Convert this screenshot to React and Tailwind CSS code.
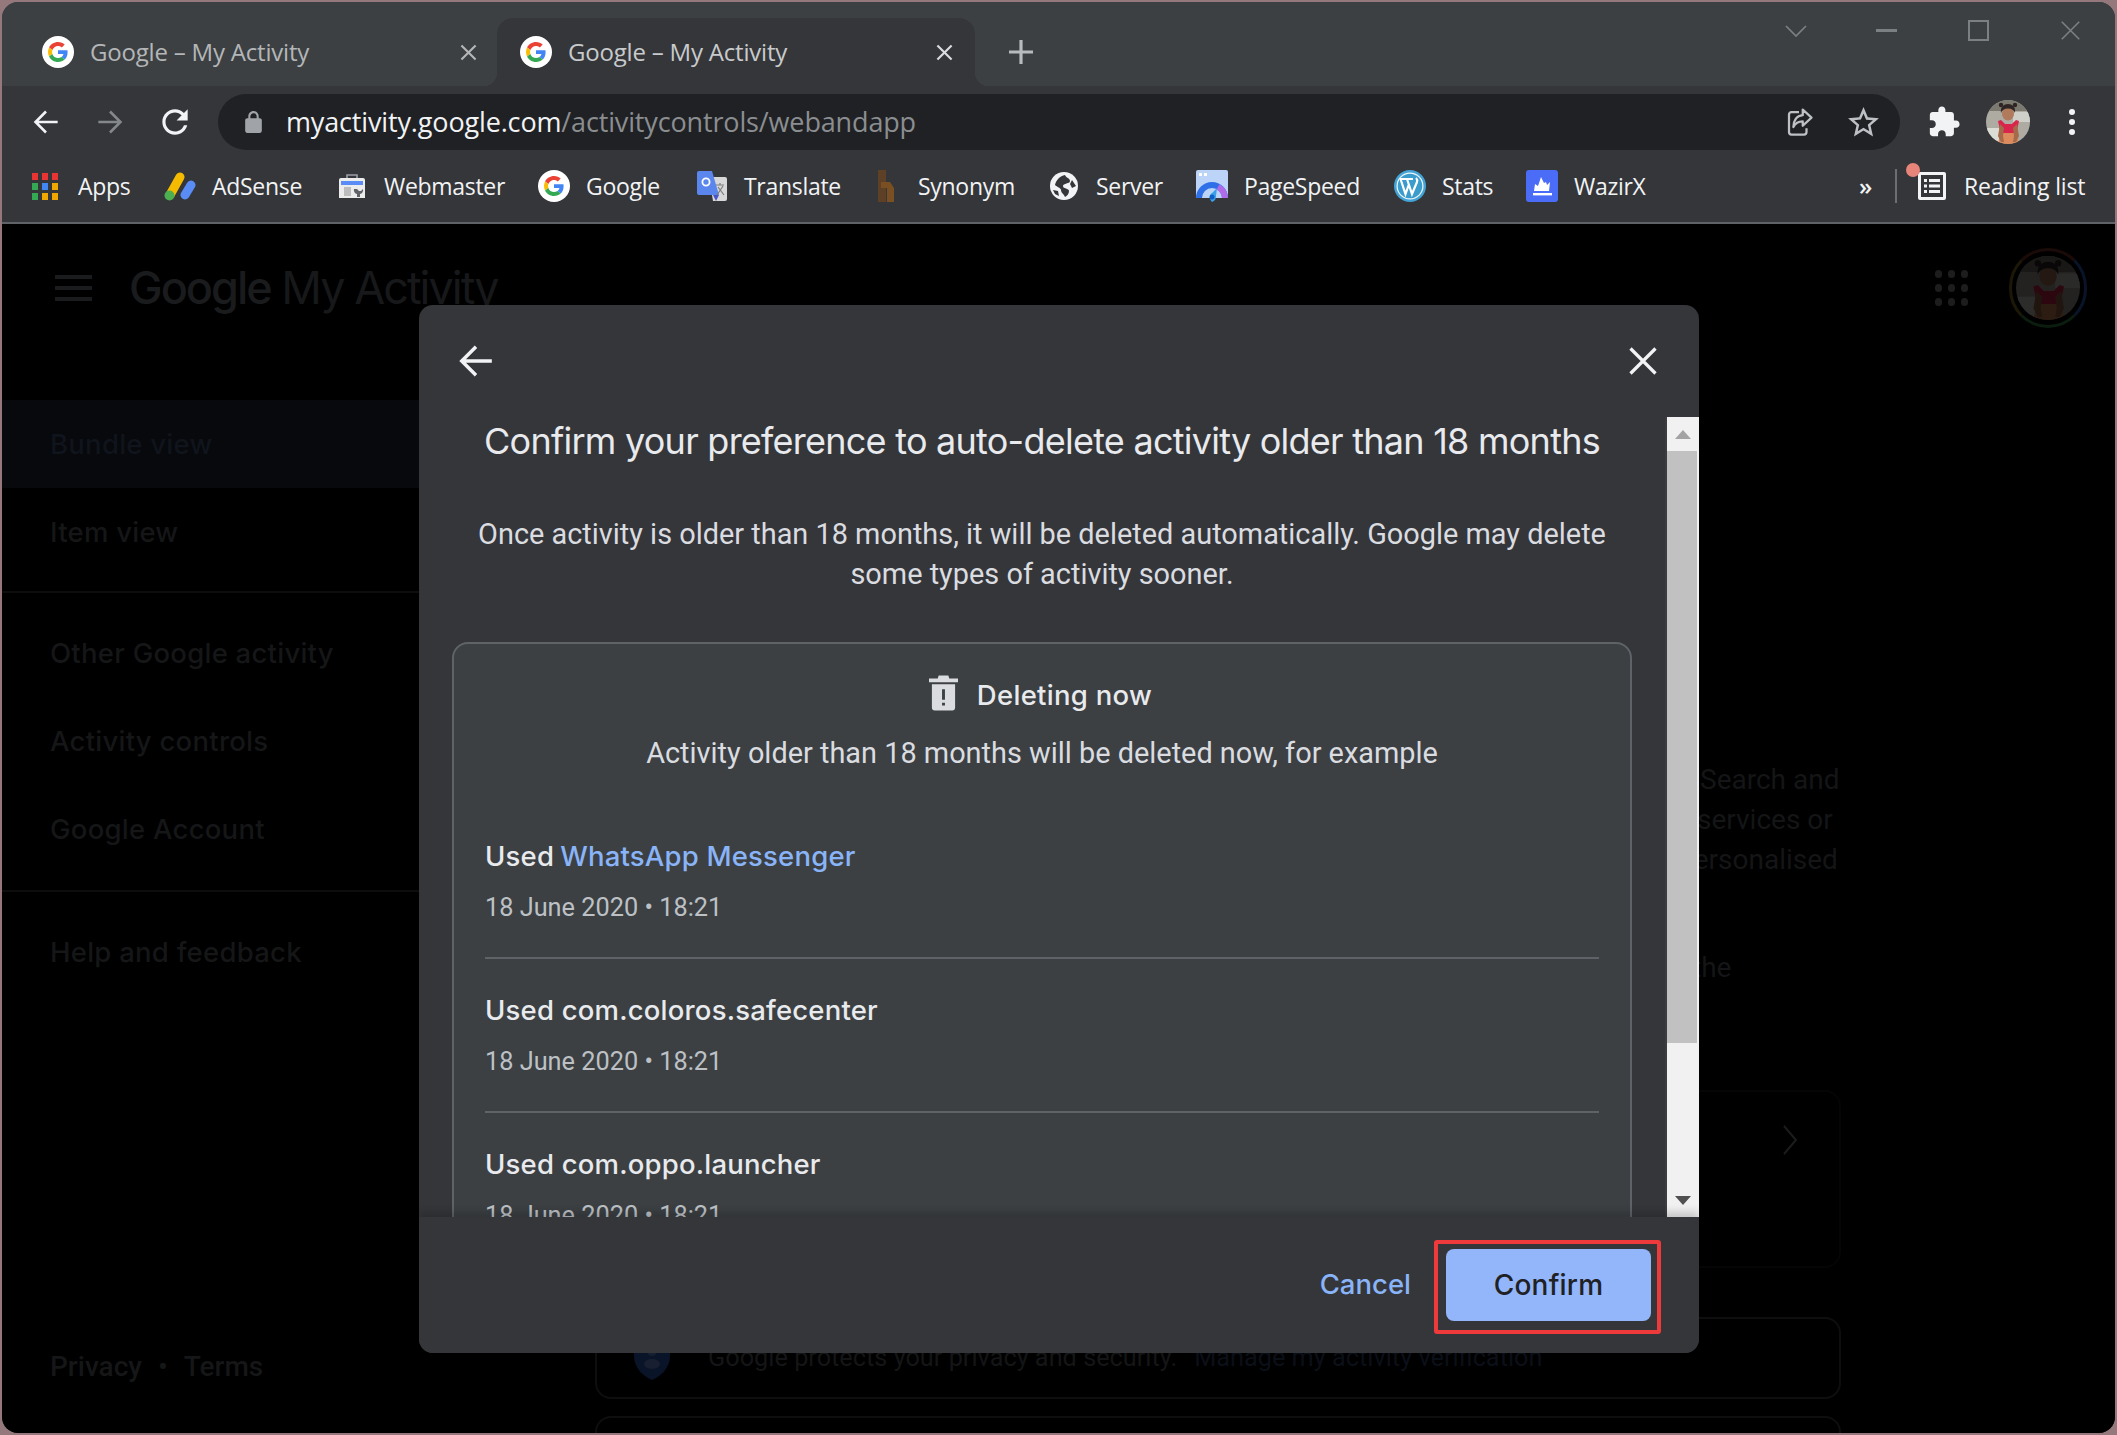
import React from "react";

const ui = "font-['Open_Sans',sans-serif]";
const gs = "font-['Inter',sans-serif]";
const rb = "font-['Roboto',sans-serif]";

function G({ className }) {
  return (
    <svg viewBox="0 0 64 64" className={className}>
      <circle cx="32" cy="32" r="32" fill="#fff" />
      <g transform="translate(12 12) scale(0.834)">
        <path fill="#EA4335" d="M24 9.5c3.54 0 6.71 1.22 9.21 3.6l6.85-6.85C35.9 2.38 30.47 0 24 0 14.62 0 6.51 5.38 2.56 13.22l7.98 6.19C12.43 13.72 17.74 9.5 24 9.5z" />
        <path fill="#4285F4" d="M46.98 24.55c0-1.57-.15-3.09-.38-4.55H24v9.02h12.94c-.58 2.96-2.26 5.48-4.78 7.18l7.73 6c4.51-4.18 7.09-10.36 7.09-17.65z" />
        <path fill="#FBBC05" d="M10.53 28.59c-.48-1.45-.76-2.99-.76-4.59s.27-3.14.76-4.59l-7.98-6.19C.92 16.46 0 20.12 0 24c0 3.88.92 7.54 2.56 10.78l7.97-6.19z" />
        <path fill="#34A853" d="M24 48c6.48 0 11.93-2.13 15.89-5.81l-7.73-6c-2.15 1.45-4.92 2.3-8.16 2.3-6.26 0-11.57-4.22-13.47-9.91l-7.98 6.19C6.51 42.62 14.62 48 24 48z" />
      </g>
    </svg>
  );
}

function Arrow({ className, dir = "left", color = "#fff", sw = 2.2 }) {
  return (
    <svg viewBox="0 0 24 24" className={className} fill="none" stroke={color} strokeWidth={sw}>
      {dir === "left" ? <path d="M22 12H3M12 3l-9 9 9 9" /> : <path d="M2 12h19M12 3l9 9-9 9" />}
    </svg>
  );
}

function X({ className, color, sw = 2.2 }) {
  return (
    <svg viewBox="0 0 24 24" className={className} fill="none" stroke={color} strokeWidth={sw}>
      <path d="M2 2l20 20M22 2L2 22" />
    </svg>
  );
}

function Avatar({ className, id }) {
  return (
    <svg viewBox="0 0 44 44" className={className}>
      <defs>
        <clipPath id={id}><circle cx="22" cy="22" r="22" /></clipPath>
      </defs>
      <g clipPath={`url(#${id})`}>
        <rect width="44" height="44" fill="#aeaca2" />
        <rect x="0" y="0" width="44" height="11" fill="#7c7a70" />
        <rect x="27" y="12" width="17" height="10" fill="#cfd0ca" />
        <rect x="0" y="28" width="13" height="16" fill="#dcdcd6" />
        <path d="M12 21l3-1 4 4h7l4-4 3 1-2 9-2 4H16l-2-4z" fill="#d9254c" />
        <path d="M14 33h17l2 11H12z" fill="#dd8a5c" />
        <path d="M14 24l-2 12 3 6h3l-1-6 1-8zM31 24l2 12-3 6h-3l1-6-1-8z" fill="#a56a4a" />
        <ellipse cx="22" cy="14" rx="6" ry="6.5" fill="#b07a5c" />
        <path d="M15 13c-1-6 3-9 7-9s8 3 7 9c-1-3-3-4.500-7-4.500s-6 1.500-7 4.500z" fill="#2e2524" />
        <circle cx="15" cy="5" r="2.200" fill="#2e2524" /><circle cx="29" cy="5" r="2.200" fill="#2e2524" />
      </g>
    </svg>
  );
}

function Bookmark({ w, icon, label, gap }) {
  return (
    <div className={`flex items-center shrink-0 ${w}`}>
      <div className={`flex items-center justify-center shrink-0 ${gap}`}>{icon}</div>
      <span className={`${ui} text-[23px] tracking-[-0.3px] text-[#f1f3f4] whitespace-nowrap leading-none`}>{label}</span>
    </div>
  );
}

const AppsIcon = (
  <svg viewBox="0 0 27 27" className="w-[27px] h-[27px]">
    <rect x="0" y="0" width="6" height="7" fill="#ea3333" /><rect x="10" y="0" width="6" height="7" fill="#ea3333" /><rect x="20" y="0" width="6" height="7" fill="#ea3333" />
    <rect x="0" y="10" width="6" height="7" fill="#34a853" /><rect x="10" y="10" width="6" height="7" fill="#4285f4" /><rect x="20" y="10" width="6" height="7" fill="#f0a800" />
    <rect x="0" y="20" width="6" height="7" fill="#34a853" /><rect x="10" y="20" width="6" height="7" fill="#f0a800" /><rect x="20" y="20" width="6" height="7" fill="#f0a800" />
  </svg>
);
const AdSense = (
  <svg viewBox="0 0 32 29" className="w-[32px] h-[29px]">
    <path d="M6 23L16 5" stroke="#f4bb00" strokeWidth="9" strokeLinecap="round" />
    <path d="M21 23L27 13" stroke="#5a8cf5" strokeWidth="9" strokeLinecap="round" />
    <circle cx="5.5" cy="23.5" r="5" fill="#4caf50" />
  </svg>
);
const Webmaster = (
  <svg viewBox="0 0 26 24" className="w-[26px] h-[24px]">
    <path d="M8 4V1h10v3" fill="none" stroke="#9aa0a6" strokeWidth="1.6" />
    <path d="M2 4h22a2 2 0 0 1 2 2v18H0V6a2 2 0 0 1 2-2z" fill="#ececec" />
    <rect x="2" y="7" width="22" height="4" fill="#5a8cf5" />
    <rect x="5" y="13" width="7" height="9" fill="#bdbdbd" />
    <path d="M15 15a4 4 0 0 0 3 5v3h3v-3a4 4 0 0 0 3-5l-2 2h-2l-2-2z" fill="#5f6368" />
  </svg>
);
const Translate = (
  <svg viewBox="0 0 30 30" className="w-[30px] h-[30px]">
    <path d="M12 6h16a2 2 0 0 1 2 2v20a2 2 0 0 1-2 2H16z" fill="#d8d8d8" />
    <path d="M2 0h13l7 24H2a2 2 0 0 1-2-2V2a2 2 0 0 1 2-2z" fill="#5a86ee" />
    <path d="M16 24l3 6 3-6z" fill="#4a55c8" />
    <circle cx="9" cy="11" r="3.6" fill="none" stroke="#fff" strokeWidth="1.8" />
    <path d="M19 14h8M23 12v2M20 24l6-9M21 16l6 8" stroke="#7d7d7d" strokeWidth="1.2" fill="none" />
  </svg>
);
const SynonymIcon = (
  <svg viewBox="0 0 18 32" className="w-[18px] h-[32px]">
    <rect x="1" y="0" width="8" height="32" fill="#5e4026" />
    <path d="M4 12h9l4 6v14h-7V18H4z" fill="#7a4f22" />
  </svg>
);
const ServerIcon = (
  <svg viewBox="0 0 28 28" className="w-[28px] h-[28px]">
    <circle cx="14" cy="14" r="14" fill="#f1f3f4" />
    <path d="M14 3c1 3 5 3 5 6 0 3-7 2-7 5 0 3 6 2 6 5 0 3-2 5-4 6-1-3-4-4-4-7 0-2-4-3-6-5 1-5 5-9 10-10z" fill="#35363a" transform="translate(1 0)" />
    <path d="M22 8l4 6-4 2-2-4zM3 18l5 1 1 5-4-2z" fill="#35363a" />
  </svg>
);
const PageSpeed = (
  <svg viewBox="0 0 32 33" className="w-[32px] h-[33px]">
    <path d="M2 0h28a2 2 0 0 1 2 2v26H0V2a2 2 0 0 1 2-2z" fill="#bcd4f8" />
    <rect x="3" y="3" width="3" height="3" fill="#fff" /><rect x="8" y="3" width="3" height="3" fill="#fff" />
    <path d="M3 28a13 13 0 0 1 26 0" fill="none" stroke="#2f6fe8" strokeWidth="6" />
    <path d="M22 17a13 13 0 0 1 7 11" fill="none" stroke="#b06be8" strokeWidth="6" />
    <path d="M16 32c-3-3-3-7 0-9l5-5-1 8c0 3-1 5-4 6z" fill="#3aa0e8" />
    <circle cx="16" cy="27" r="2.5" fill="#0f5fc8" />
  </svg>
);
const WP = (
  <svg viewBox="0 0 32 32" className="w-[32px] h-[32px]">
    <circle cx="16" cy="16" r="16" fill="#42a4d6" />
    <circle cx="16" cy="16" r="13.500" fill="#f1f6f9" />
    <circle cx="16" cy="16" r="12.300" fill="#3a9ccc" />
    <path d="M6 9h7M6.500 9l5 15 3.500-10M12 9h7M13 9l5 15 5-12c.7-2 0-3-1-4" fill="none" stroke="#fff" strokeWidth="2.200" />
  </svg>
);
const Wazir = (
  <svg viewBox="0 0 32 32" className="w-[32px] h-[32px]">
    <rect width="32" height="32" rx="3" fill="#4a6cf7" />
    <path d="M8 21l1-7 3 2 3-9 3 6 2-1 1 3 3-3-1 9z" fill="#fff" />
    <rect x="7" y="23" width="19" height="2.400" fill="#fff" />
  </svg>
);

function Row({ children, divider }) {
  return (
    <div className={`h-[154px] flex flex-col shrink-0 ${divider ? "border-b-2 border-[#5f6368]" : ""}`}>
      <div className={`${gs} h-[34px] mt-[35px] flex items-center text-[27.5px] font-medium tracking-[0.2px] text-[#e8eaed] whitespace-nowrap`}>{children}</div>
      <div className={`${rb} h-[34px] mt-[17px] flex items-center text-[25.3px] text-[#bdc1c6] whitespace-nowrap`}>18 June 2020 • 18:21</div>
    </div>
  );
}

function Modal() {
  return (
    <div className="absolute left-[417px] top-[303px] w-[1280px] h-[1048px] bg-[#35363a] rounded-[14px] overflow-hidden flex flex-col">
      <div className="h-[112px] shrink-0 flex items-center justify-between pl-[38px] pr-[41px]">
        <Arrow className="w-[38px] h-[38px]" color="#f1f3f4" sw={2.2} />
        <X className="w-[30px] h-[30px]" color="#f1f3f4" sw={2.6} />
      </div>
      <div className="flex-1 min-h-0 flex">
        <div className="flex-1 min-w-0 overflow-hidden px-[33px]">
          <h1 className={`${gs} h-[48px] flex items-center justify-center text-[36px] font-normal tracking-[-0.75px] text-[#e8eaed] whitespace-nowrap`}>
            Confirm your preference to auto-delete activity older than 18 months
          </h1>
          <p className={`${rb} mt-[49px] text-center text-[28.9px] leading-[40px] text-[#dadce0] whitespace-nowrap`}>
            Once activity is older than 18 months, it will be deleted automatically. Google may delete<br />some types of activity sooner.
          </p>
          <div className="mt-[48px] bg-[#3c4043] border-2 border-[#5f6368] rounded-[16px] px-[31px] h-[700px]">
            <div className="h-[37px] mt-[33px] flex items-center justify-center gap-[19px]">
              <svg viewBox="0 0 30 36" className="w-[29px] h-[36px] mt-[-5px] ml-[-3px]">
                <path fillRule="evenodd" fill="#dadce0" d="M10 0h10l1 3h9v4H0V3h9zM3 9h24v24a3 3 0 0 1-3 3H6a3 3 0 0 1-3-3zM13.5 14v11h3V14zM13.5 28v3h3v-3z" />
              </svg>
              <span className={`${gs} text-[27.5px] font-medium tracking-[0.3px] text-[#e8eaed]`}>Deleting now</span>
            </div>
            <div className={`${rb} h-[36px] mt-[22px] flex items-center justify-center text-[28.9px] text-[#dadce0] whitespace-nowrap`}>
              Activity older than 18 months will be deleted now, for example
            </div>
            <div className="mt-[33px]">
              <Row divider>
                Used<span className="text-[#8ab4f8] ml-[6px]">WhatsApp Messenger</span>
              </Row>
              <Row divider>Used com.coloros.safecenter</Row>
              <Row>Used com.oppo.launcher</Row>
            </div>
          </div>
        </div>
        <div className="w-[34px] shrink-0 bg-[#f1f1f1] flex flex-col items-center border-l-2 border-[#3c3d41]">
          <div className="h-[34px] w-full flex items-center justify-center">
            <div className="w-0 h-0 border-l-[8px] border-r-[8px] border-b-[9px] border-l-transparent border-r-transparent border-b-[#a3a3a3]"></div>
          </div>
          <div className="h-[592px] w-full bg-[#c1c1c1] border-r-2 border-[#f1f1f1]"></div>
          <div className="mt-auto h-[34px] w-full flex items-center justify-center">
            <div className="w-0 h-0 border-l-[8px] border-r-[8px] border-t-[9px] border-l-transparent border-r-transparent border-t-[#505050]"></div>
          </div>
        </div>
      </div>
      <div className="relative h-[136px] shrink-0 bg-[#35363a] shadow-[0_-5px_8px_rgba(0,0,0,0.18)] flex items-center justify-end pr-[38px] pb-[2px]">
        <span className={`${gs} mt-[2px] text-[27.5px] font-medium tracking-[0px] text-[#8ab4f8] mr-[23px]`}>Cancel</span>
        <div className="mt-[6px] w-[227px] h-[94px] border-[4px] border-[#ee3a3a] rounded-[3px] flex items-start justify-start pl-[8px] pt-[5px]">
          <button className={`${gs} w-[205px] h-[72px] bg-[#93b5fa] rounded-[8px] text-[28px] font-medium tracking-[0.2px] text-[#202124]`}>Confirm</button>
        </div>
      </div>
    </div>
  );
}

function NavItem({ children, active }) {
  return (
    <div className={`h-[88px] shrink-0 flex items-center pl-[48px] pt-[2px] ${gs} text-[27.5px] tracking-[0.25px] font-medium ${active ? "bg-[#07090c] text-[#10141c]" : "text-[#151617]"}`}>
      {children}
    </div>
  );
}

function Page() {
  const dim = `${rb} text-[28px] leading-[40px] text-[#141516] whitespace-nowrap`;
  return (
    <div className="flex-1 min-h-0 bg-black flex flex-col overflow-hidden">
      <div className="h-[128px] shrink-0 flex items-center pl-[53px] pr-[28px]">
        <div className="w-[37px] flex flex-col gap-[7px] shrink-0">
          <div className="h-[4px] bg-[#1a1b1c]"></div>
          <div className="h-[4px] bg-[#1a1b1c]"></div>
          <div className="h-[4px] bg-[#1a1b1c]"></div>
        </div>
        <div className={`${gs} ml-[37px] text-[45px] tracking-[-2px] text-[#1a1b1d] whitespace-nowrap`}>
          <span className="font-medium">Google</span> <span className="font-normal text-[#17181a]">My Activity</span>
        </div>
        <div className="ml-auto grid grid-cols-3 gap-[6px] w-[33px] shrink-0">
          {[0, 1, 2, 3, 4, 5, 6, 7, 8].map((i) => (
            <div key={i} className="w-[7px] h-[8px] rounded-full bg-[#1d1d1e]"></div>
          ))}
        </div>
        <div className="ml-[41px] w-[78px] h-[80px] rounded-full border-[3px] border-t-[#1a0b08] border-r-[#0a1428] border-b-[#0a1d0e] border-l-[#1c1706] p-[4px] shrink-0">
          <div className="opacity-20 w-full h-full"><Avatar id="av2" className="w-full h-full" /></div>
        </div>
      </div>
      <div className="flex-1 min-h-0 flex">
        <div className="w-[417px] shrink-0 flex flex-col pt-[48px]">
          <NavItem active>Bundle view</NavItem>
          <NavItem>Item view</NavItem>
          <div className="h-[2px] mt-[15px] bg-[#0d0d0d] shrink-0"></div>
          <div className="h-[16px] shrink-0"></div>
          <NavItem>Other Google activity</NavItem>
          <NavItem>Activity controls</NavItem>
          <NavItem>Google Account</NavItem>
          <div className="h-[2px] mt-[17px] bg-[#0d0d0d] shrink-0"></div>
          <div className="h-[16px] shrink-0"></div>
          <NavItem>Help and feedback</NavItem>
          <div className={`mt-auto mb-[45px] pl-[48px] ${rb} text-[28px] font-medium text-[#151617] flex gap-[16px] whitespace-nowrap`}>
            <span>Privacy</span><span>•</span><span>Terms</span>
          </div>
        </div>
        <div className="ml-[176px] w-[1246px] shrink-0 pt-[408px] flex flex-col">
          <div className={`${dim} ml-[1105px]`}>Search and</div>
          <div className={`${dim} ml-[1102px]`}>services or</div>
          <div className={`${dim} ml-[1083px]`}>personalised</div>
          <div className={`${dim} ml-[1097px] mt-[68px]`}>the</div>
          <div className="mt-[102px] h-[178px] shrink-0 border-2 border-[#050505] rounded-[16px] flex items-start justify-end pr-[41px] pt-[32px]">
            <svg viewBox="0 0 16 32" className="w-[16px] h-[32px]" fill="none" stroke="#1b1c1d" strokeWidth="2"><path d="M2 2l12 14L2 30" /></svg>
          </div>
          <div className="mt-[49px] h-[82px] shrink-0 border-2 border-[#0e0e0e] rounded-[16px] flex items-center pl-[37px]">
            <svg viewBox="0 0 36 44" className="w-[36px] h-[44px] shrink-0"><path d="M18 0l18 6v14c0 11-8 20-18 24C8 40 0 31 0 20V6z" fill="#0a1428" /><circle cx="18" cy="15" r="5" fill="#171f30" /><ellipse cx="18" cy="28" rx="8" ry="5" fill="#171f30" /></svg>
            <span className={`${rb} ml-[38px] text-[25.3px] text-[#141516] whitespace-nowrap`}>Google protects your privacy and security.</span>
            <span className={`${rb} ml-[17px] text-[25.3px] text-[#0b0f18] whitespace-nowrap`}>Manage my activity verification</span>
          </div>
          <div className="mt-[17px] h-[100px] shrink-0 border-2 border-[#0e0e0e] rounded-[16px]"></div>
        </div>
      </div>
    </div>
  );
}

export default function App() {
  return (
    <div className="w-[2117px] h-[1435px] bg-[#94787c] p-[2px] overflow-hidden relative">
      <div className="relative w-full h-full rounded-[16px] overflow-hidden flex flex-col bg-[#3c4043]">
        <div className="h-[84px] shrink-0 bg-[#3c4043] flex items-end relative">
          <div className="w-[495px] h-[68px] shrink-0 flex items-center pl-[40px] pr-[20px]">
            <G className="w-[32px] h-[32px] shrink-0" />
            <span className={`${ui} ml-[16px] text-[24px] tracking-[-0.2px] text-[#b4b6b8] whitespace-nowrap`}>Google – My Activity</span>
            <X className="ml-auto w-[17px] h-[17px] shrink-0" color="#b4b6b8" sw={3} />
          </div>
          <div className="relative w-[478px] h-[68px] shrink-0 bg-[#35363a] rounded-t-[16px] flex items-center pl-[23px] pr-[22px] before:absolute before:bottom-0 before:left-[-14px] before:w-[14px] before:h-[14px] before:bg-[radial-gradient(circle_at_0_0,transparent_14px,#35363a_14.5px)] after:absolute after:bottom-0 after:right-[-14px] after:w-[14px] after:h-[14px] after:bg-[radial-gradient(circle_at_100%_0,transparent_14px,#35363a_14.5px)]">
            <G className="w-[32px] h-[32px] shrink-0" />
            <span className={`${ui} ml-[16px] text-[24px] tracking-[-0.2px] text-[#c8cacc] whitespace-nowrap`}>Google – My Activity</span>
            <X className="ml-auto w-[17px] h-[17px] shrink-0" color="#dadce0" sw={3} />
          </div>
          <div className="ml-[34px] mb-[22px] w-[24px] h-[24px] relative shrink-0">
            <svg viewBox="0 0 24 24" className="w-[24px] h-[24px]" fill="none" stroke="#b8bbbd" strokeWidth="3.2"><path d="M12 0v24M0 12h24" /></svg>
          </div>
          <div className="absolute top-[18px] right-[34px] flex items-center">
            <svg viewBox="0 0 22 12" className="w-[22px] h-[12px]" fill="none" stroke="#7b8083" strokeWidth="1.7"><path d="M1 1l10 10L21 1" /></svg>
            <div className="ml-[69px] w-[21px] h-[2.5px] bg-[#7b8083]"></div>
            <div className="ml-[71px] w-[21px] h-[21px] border-[2px] border-[#7b8083]"></div>
            <X className="ml-[71px] w-[21px] h-[21px]" color="#7b8083" sw={1.8} />
          </div>
        </div>

        <div className="h-[64px] shrink-0 bg-[#35363a] pt-[8px] flex items-start pl-[30px]">
          <div className="h-[56px] flex items-center shrink-0">
            <Arrow className="w-[28px] h-[28px]" color="#f1f3f4" />
            <Arrow className="ml-[36px] w-[28px] h-[28px]" dir="right" color="#85888b" />
            <svg viewBox="0 0 24 24" className="ml-[32px] w-[38px] h-[38px]" fill="#f1f3f4">
              <path d="M17.65 6.35C16.2 4.9 14.21 4 12 4c-4.42 0-7.99 3.58-7.99 8s3.57 8 7.99 8c3.73 0 6.84-2.55 7.73-6h-2.08c-.82 2.33-3.04 4-5.65 4-3.31 0-6-2.69-6-6s2.69-6 6-6c1.66 0 3.14.69 4.22 1.78L13 11h7V4l-2.35 2.35z" />
            </svg>
          </div>
          <div className="ml-[24px] w-[1682px] h-[56px] shrink-0 rounded-full bg-[#202124] flex items-center pl-[23px] pr-[18px]">
            <svg viewBox="0 0 24 24" className="w-[25px] h-[25px] shrink-0" fill="#a0a3a7">
              <path d="M18 8h-1V6c0-2.76-2.24-5-5-5S7 3.24 7 6v2H6c-1.1 0-2 .9-2 2v10c0 1.1.9 2 2 2h12c1.1 0 2-.9 2-2V10c0-1.1-.9-2-2-2zM9 6c0-1.66 1.34-3 3-3s3 1.34 3 3v2H9V6z" />
            </svg>
            <div className={`${ui} ml-[20px] text-[27px] tracking-[-0.15px] whitespace-nowrap`}>
              <span className="text-[#f1f3f4]">myactivity.google.com</span>
              <span className="text-[#8b8e91]">/activitycontrols/webandapp</span>
            </div>
            <svg viewBox="0 0 24 24" className="ml-auto w-[30px] h-[30px] shrink-0" fill="none" stroke="#bdc1c6" strokeWidth="1.8">
              <path d="M12 4H6a2 2 0 0 0-2 2v14a2 2 0 0 0 2 2h10a2 2 0 0 0 2-2v-3" />
              <path d="M15 2l7 6.5-7 6.5v-3.5c-4 0-6 1.5-7.5 4.5 0-5 2.5-9 7.5-9.5z" strokeLinejoin="round" />
            </svg>
            <svg viewBox="0 0 24 24" className="ml-[31px] w-[37px] h-[37px] shrink-0" fill="#bdc1c6">
              <path d="M22 9.24l-7.19-.62L12 2 9.19 8.63 2 9.24l5.46 4.73L5.82 21 12 17.27 18.18 21l-1.63-7.03L22 9.24zM12 15.4l-3.76 2.27 1-4.28-3.32-2.88 4.38-.38L12 6.1l1.71 4.04 4.38.38-3.32 2.88 1 4.28L12 15.4z" />
            </svg>
          </div>
          <div className="h-[56px] flex items-center shrink-0">
            <svg viewBox="0 0 24 24" className="ml-[27px] w-[34px] h-[34px] shrink-0" fill="#f1f3f4">
              <path d="M20.5 11H19V7c0-1.1-.9-2-2-2h-4V3.5C13 2.12 11.88 1 10.5 1S8 2.12 8 3.5V5H4c-1.1 0-1.99.9-1.99 2v3.8H3.5c1.49 0 2.7 1.21 2.7 2.7s-1.21 2.7-2.7 2.7H2V20c0 1.1.9 2 2 2h3.8v-1.5c0-1.49 1.21-2.7 2.7-2.7 1.49 0 2.7 1.21 2.7 2.7V22H17c1.1 0 2-.9 2-2v-4h1.5c1.38 0 2.5-1.12 2.5-2.5S21.88 11 20.5 11z" />
            </svg>
            <Avatar id="av1" className="ml-[25px] w-[44px] h-[44px] shrink-0" />
            <div className="ml-[39px] flex flex-col gap-[4px] shrink-0">
              <div className="w-[6px] h-[6px] rounded-full bg-[#f1f3f4]"></div>
              <div className="w-[6px] h-[6px] rounded-full bg-[#f1f3f4]"></div>
              <div className="w-[6px] h-[6px] rounded-full bg-[#f1f3f4]"></div>
            </div>
          </div>
        </div>

        <div className="h-[74px] shrink-0 bg-[#35363a] border-b-2 border-[#5f6368] flex items-center pl-[30px]">
          <Bookmark w="w-[132px]" gap="w-[46px] justify-start" icon={AppsIcon} label="Apps" />
          <Bookmark w="w-[175px]" gap="w-[48px] justify-start" icon={AdSense} label="AdSense" />
          <Bookmark w="w-[199px]" gap="w-[45px] justify-start" icon={Webmaster} label="Webmaster" />
          <Bookmark w="w-[159px]" gap="w-[48px] justify-start" icon={<G className="w-[32px] h-[32px]" />} label="Google" />
          <Bookmark w="w-[180px]" gap="w-[47px] justify-start" icon={Translate} label="Translate" />
          <Bookmark w="w-[173px]" gap="w-[41px] justify-start" icon={SynonymIcon} label="Synonym" />
          <Bookmark w="w-[146px]" gap="w-[46px] justify-start" icon={ServerIcon} label="Server" />
          <Bookmark w="w-[198px]" gap="w-[48px] justify-start" icon={PageSpeed} label="PageSpeed" />
          <Bookmark w="w-[132px]" gap="w-[48px] justify-start" icon={WP} label="Stats" />
          <Bookmark w="w-[333px]" gap="w-[48px] justify-start" icon={Wazir} label="WazirX" />
          <span className={`${ui} text-[24px] font-semibold text-[#f1f3f4] leading-none w-[36px] shrink-0`}>»</span>
          <div className="w-[2px] h-[34px] bg-[#6b6e72] shrink-0"></div>
          <div className="relative ml-[21px] w-[28px] h-[28px] shrink-0">
            <svg viewBox="0 0 28 28" className="w-[28px] h-[28px]" fill="#f1f3f4">
              <path fillRule="evenodd" d="M2 0h24a2 2 0 0 1 2 2v24a2 2 0 0 1-2 2H2a2 2 0 0 1-2-2V2a2 2 0 0 1 2-2zM3 3v22h22V3z" />
              <rect x="6" y="7" width="3" height="3" /><rect x="11" y="7" width="11" height="3" />
              <rect x="6" y="12.500" width="3" height="3" /><rect x="11" y="12.500" width="11" height="3" />
              <rect x="6" y="18" width="3" height="3" /><rect x="11" y="18" width="11" height="3" />
            </svg>
            <div className="absolute left-[-12px] top-[-9px] w-[14px] h-[14px] rounded-full bg-[#e8857a]"></div>
          </div>
          <span className={`${ui} ml-[18px] text-[23px] tracking-[-0.15px] text-[#f1f3f4] whitespace-nowrap leading-none`}>Reading list</span>
        </div>

        <Page />
        <Modal />
      </div>
    </div>
  );
}
